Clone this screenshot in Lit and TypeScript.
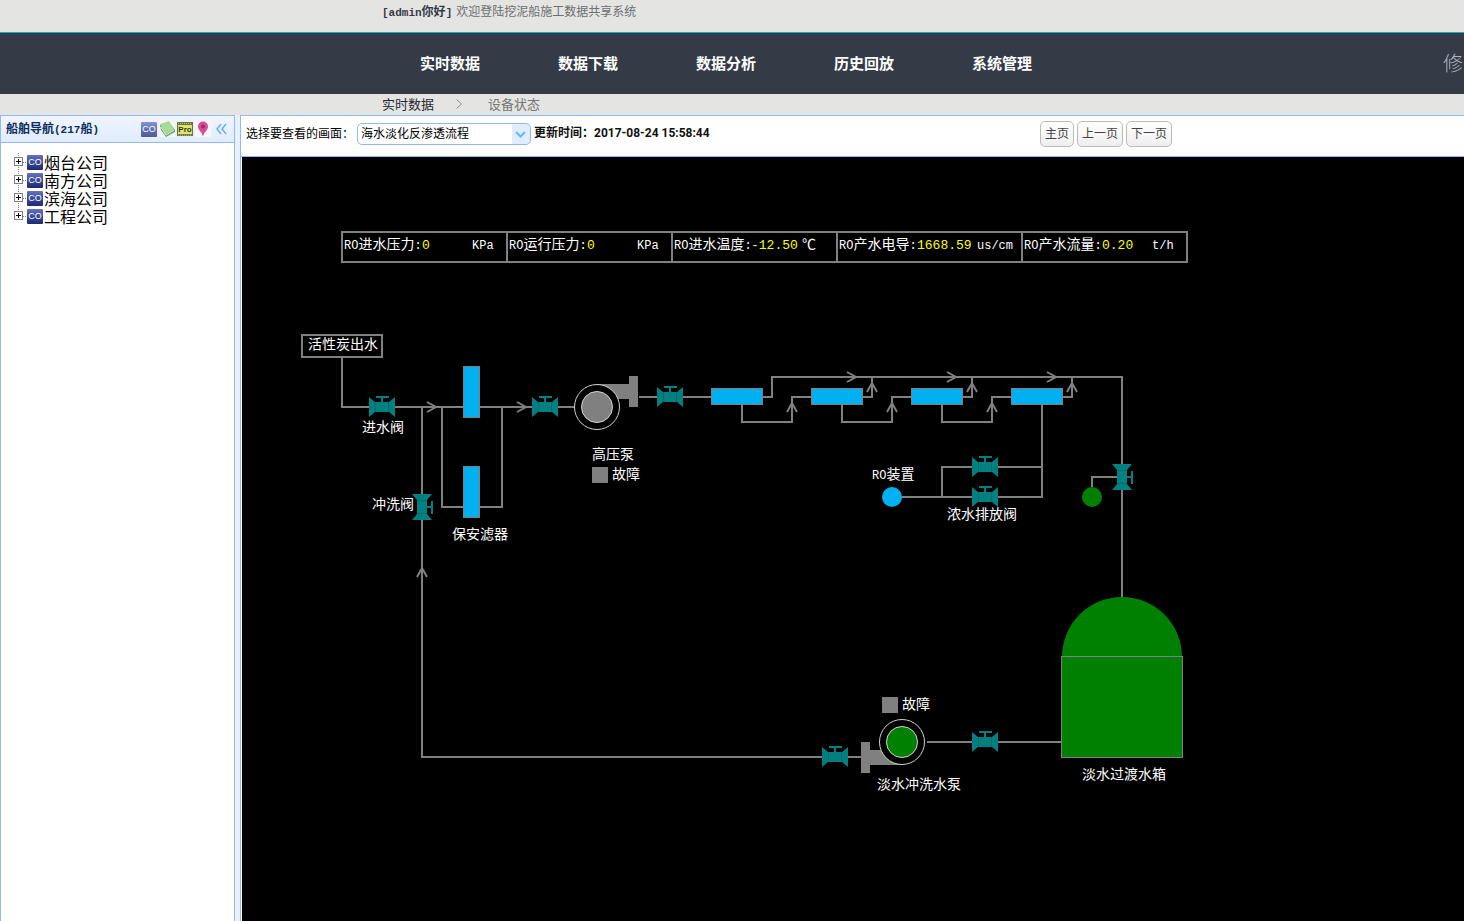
import { LitElement, html, svg, css } from "lit";
import { customElement, state } from "lit/decorators.js";

const NAV = ["实时数据", "数据下载", "数据分析", "历史回放", "系统管理"];
const COMPANIES = ["烟台公司", "南方公司", "滨海公司", "工程公司"];

/* Readings strip: left edge, label, value, value x, unit, unit x */
const READINGS = [
  { x: 102, label: "进水压力", value: "0", vx: 180, unit: "KPa", ux: 230, right: 265 },
  { x: 267, label: "运行压力", value: "0", vx: 345, unit: "KPa", ux: 395, right: 430 },
  { x: 432, label: "进水温度", value: "-12.50", vx: 509, unit: "℃", ux: 560, right: 595 },
  { x: 597, label: "产水电导", value: "1668.59", vx: 675, unit: "us/cm", ux: 735, right: 780 },
  { x: 782, label: "产水流量", value: "0.20", vx: 860, unit: "t/h", ux: 910, right: 945 },
];

/* Valve centres; upright ones are turned a quarter */
const VALVES: [number, number, number][] = [
  [140, 250, 0], [303, 250, 0], [428, 240, 0], [743, 310, 0], [743, 340, 0],
  [180, 350, 90], [880, 320, 90], [593, 600, 0], [743, 585, 0],
];

/* Arrow tips and direction in degrees, 0 pointing right */
const ARROWS: [number, number, number][] = [
  [195, 250, 0], [285, 250, 0], [615, 220, 0], [715, 220, 0], [815, 220, 0],
  [550, 245, -90], [650, 245, -90], [750, 245, -90],
  [630, 225, -90], [730, 225, -90], [830, 225, -90], [180, 410, -90],
];

const LABELS: [number, number, string][] = [
  [66, 192, "活性炭出水"], [120, 275, "进水阀"], [130, 352, "冲洗阀"],
  [210, 382, "保安滤器"], [350, 302, "高压泵"], [370, 322, "故障"],
  [705, 362, "浓水排放阀"], [660, 552, "故障"], [635, 632, "淡水冲洗水泵"],
  [840, 622, "淡水过渡水箱"],
];

@customElement("process-diagram")
export class ProcessDiagram extends LitElement {
  static styles = css`
    :host { display: flex; flex: 1; background: #000; overflow: hidden; }
    svg { display: block; width: 100%; min-height: 680px; }
    text { font: 14px "Noto Sans CJK SC", sans-serif; fill: #fff; }
    .latin { font: 12px "Liberation Mono", monospace; }
    .value { font: 13px "Liberation Mono", monospace; fill: #ff0; }
    .pipe { fill: none; stroke: #808080; stroke-width: 2; }
    .water { fill: #00b0f0; stroke: #808080; }
    .valve { fill: #008080; }
    .seam { stroke: #006c6c; }
    .gray { fill: #808080; }
    .blue { fill: #00b0f0; }
    .green { fill: #008000; }
    .tank { fill: #008000; stroke: #808080; }
    .ring { fill: #000; stroke: #d3d3d3; }
    .core { stroke: #d3d3d3; }
  `;

  private pump(x: number, y: number, angle: number, tone: string) {
    return svg`<g transform="translate(${x} ${y}) rotate(${angle})">
      <path class="gray" d="M0 -23H32V-8H0zM32 -31H41V0H32z"/>
      <circle class="ring" r="22.5"/>
      <circle class="core ${tone}" r="15.5"/>
    </g>`;
  }

  render() {
    return html`<svg role="img" aria-label="海水淡化反渗透流程">
      <path class="pipe" d="M100 75H945V105H100z"/>
      ${READINGS.map(r => svg`
        <path class="pipe" d="M${r.right} 75V105"/>
        <text x=${r.x} y="92"><tspan class="latin">RO</tspan>${r.label}<tspan class="latin">:</tspan></text>
        <text class="value" x=${r.vx} y="92">${r.value}</text>
        <text class=${r.unit === "℃" ? "" : "latin"} x=${r.ux} y="92">${r.unit}</text>`)}

      <rect class="pipe" x="60" y="178" width="80" height="22"/>
      <path class="pipe" d="M100 200V250H332M180 250V600H619M200 250V350H260V250"/>
      <path class="pipe" d="M397 240H469M521 240H530V220H880V440"/>
      ${[0, 100, 200].map(d => svg`<path class="pipe"
        d="M${500 + d} 248V265H${550 + d}V240H${569 + d}M${621 + d} 240H${630 + d}V220"/>`)}
      <path class="pipe" d="M821 240H830V220M800 248V340H650M700 340V310H800M850 330V320H880M685 585H819"/>

      ${[0, 100, 200, 300].map(d => svg`<rect class="water" x=${469.5 + d} y="231.5" width="51" height="16"/>`)}
      ${[0, 100].map(d => svg`<rect class="water" x="221.5" y=${209.5 + d} width="16" height="51"/>`)}

      ${ARROWS.map(([x, y, a]) => svg`<path class="pipe" transform="translate(${x} ${y}) rotate(${a})" d="M-10 -5L-1 0L-10 5"/>`)}
      ${VALVES.map(([x, y, a]) => svg`<g transform="translate(${x} ${y}) rotate(${a})">
        <path class="valve" d="M-13 -10L-7 -5H-1V-9H-6V-11H7V-9H1V-5H7L13 -10V10L7 5H-7L-13 10z"/>
        <path class="seam" d="M-6.5 -5V5M6.5 -5V5"/>
      </g>`)}

      ${this.pump(355, 250, 0, "gray")}
      ${this.pump(660, 585, 180, "green")}
      <rect class="gray" x="350" y="310" width="16" height="16"/>
      <rect class="gray" x="640" y="540" width="16" height="16"/>
      <circle class="blue" cx="650" cy="340" r="10"/>
      <circle class="green" cx="850" cy="340" r="10"/>
      <circle class="green" cx="880" cy="500" r="60"/>
      <rect class="tank" x="819.5" y="499.5" width="121" height="101"/>

      ${LABELS.map(([x, y, t]) => svg`<text x=${x} y=${y}>${t}</text>`)}
      <text x="630" y="322"><tspan class="latin">RO</tspan>装置</text>
    </svg>`;
  }
}

@customElement("co-icon")
export class CoIcon extends LitElement {
  static styles = css`
    :host { display: block; width: 16px; height: 16px; }
    svg { display: block; }
    text { font: 9px "Liberation Sans", sans-serif; fill: #fff; }
  `;
  render() {
    return html`<svg width="16" height="16" viewBox="0 0 16 16" aria-hidden="true">
      <defs><linearGradient id="g" x2="0" y2="1">
        <stop offset="0" stop-color="#6674bd"/><stop offset=".5" stop-color="#39489b"/><stop offset="1" stop-color="#20296c"/>
      </linearGradient></defs>
      <rect y="1" width="16" height="15" rx="1" fill="url(#g)"/>
      <text x="8" y="11" text-anchor="middle">CO</text>
    </svg>`;
  }
}

@customElement("ship-navigator")
export class ShipNavigator extends LitElement {
  static styles = css`
    :host { display: flex; flex-direction: column; border: 1px solid #95b8e7; border-bottom: 0; background: #fff; }
    .head {
      display: flex; align-items: center; height: 26px; padding: 0 5px;
      border-bottom: 1px solid #95b8e7; background: linear-gradient(#eff5ff, #e0ecff);
    }
    h2 { flex: 1; margin: 0; color: #0e2d5f; font: bold 12px/16px "Noto Sans CJK SC", sans-serif; white-space: nowrap; }
    .mono { font-family: "Liberation Mono", monospace; font-size: 11px; }
    .tools { display: flex; gap: 2px; }
    button { display: block; width: 16px; height: 16px; padding: 0; border: 0; background: none; cursor: pointer; }
    button svg { display: block; }
    .faded { opacity: .75; }
    .pro { font: bold 8px "Liberation Sans", sans-serif; fill: #33371c; }
    ul { list-style: none; margin: 0; padding: 10px 12px; }
    li { display: flex; align-items: center; height: 18px; font-size: 16px; line-height: 18px; color: #000; }
    .toggle { width: 14px; height: 18px; }
    a { display: flex; align-items: center; gap: 1px; color: inherit; text-decoration: none; }
  `;
  render() {
    return html`
      <div class="head">
        <h2>船舶导航<span class="mono">(217</span>船<span class="mono">)</span></h2>
        <div class="tools">
          <button class="faded" aria-label="公司"><co-icon></co-icon></button>
          <button aria-label="图册"><svg width="16" height="16">
            <rect width="16" height="16" fill="#f4f7f4"/>
            <path d="M1 4L10 1L16 9V11L7 16L2 9z" fill="#6aa567"/>
            <path d="M1 3L10 0L15 8L7 13z" fill="#a4dc98"/>
            <path d="M2 6L7 14L15 9" fill="none" stroke="#eef5e8"/>
          </svg></button>
          <button aria-label="项目"><svg width="16" height="16">
            <rect y="1" width="16" height="14" fill="#6d7142"/>
            <rect x="1" y="4" width="14" height="9" fill="#dee56c"/>
            <path d="M1 2.500H15M1 14H15" stroke="#c3c785" stroke-dasharray="1 1"/>
            <text class="pro" x="8" y="11" text-anchor="middle">Pro</text>
          </svg></button>
          <button aria-label="定位"><svg width="16" height="16">
            <rect width="16" height="16" fill="#f8f6fb"/>
            <path d="M8 15.500C7 11 3 9 3 5.500A5 5 0 0 1 13 5.500C13 9 9 11 8 15.500z" fill="#dc4b96"/>
            <circle cx="8" cy="5.500" r="2" fill="#8c3566"/>
          </svg></button>
          <button aria-label="收起"><svg width="16" height="16">
            <path d="M8 3L4 8L8 13M13 3L9 8L13 13" fill="none" stroke="#62b2ee" stroke-width="1.500"/>
          </svg></button>
        </div>
      </div>
      <ul>
        ${COMPANIES.map((name, i) => html`<li>
          <button class="toggle" aria-label="展开${name}"><svg width="14" height="18">
            <path d=${i < COMPANIES.length - 1 ? "M5.5 0V18" : "M5.5 0V9"} stroke="#808080" stroke-dasharray="1 1"/>
            <path d="M10 9.500H14" stroke="#808080" stroke-dasharray="1 1"/>
            <rect x="1.500" y="4.500" width="8" height="8" fill="#fff" stroke="#808080"/>
            <path d="M3 8.500H8M5.500 6V11" stroke="#000"/>
          </svg></button>
          <a href="#"><co-icon></co-icon>${name}</a>
        </li>`)}
      </ul>`;
  }
}

@customElement("app-root")
export class AppRoot extends LitElement {
  @state() private view = "海水淡化反渗透流程";

  static styles = css`
    :host {
      display: flex; flex-direction: column; min-height: 100vh; overflow: hidden;
      background: #e4e4e2; color: #000; font: 12px/16px "Noto Sans CJK SC", sans-serif;
    }
    .wrap { width: 700px; max-width: 100%; margin: 0 auto; }
    .welcome { height: 32px; border-bottom: 1px solid #1ca8cd; color: #6b6f70; }
    .welcome .wrap { display: flex; gap: 4px; padding-top: 3px; }
    .welcome strong { color: #343a46; }
    .mono { font-family: "Liberation Mono", monospace; font-size: 11px; }
    nav {
      display: grid; grid-template-columns: 1fr auto 1fr; align-items: center;
      box-sizing: border-box; height: 61px; padding-bottom: 2px; background: #343a46;
    }
    .menu { display: flex; grid-column: 2; box-sizing: border-box; width: 700px; padding-left: 38px; gap: 78px; }
    .menu a { color: #fff; font-size: 15px; line-height: 20px; font-weight: bold; text-decoration: none; white-space: nowrap; }
    .account { justify-self: end; width: 21px; color: #b0b3b8; font-size: 20px; line-height: 24px; font-weight: 300; text-decoration: none; }
    .crumbs { height: 21px; color: #777; font-size: 13px; line-height: 20px; }
    .crumbs .wrap { display: flex; align-items: center; }
    .crumbs a { color: #222831; text-decoration: none; }
    .crumbs svg { margin: 0 25px 0 21px; }
    .body { display: flex; flex: 1; gap: 5px; background: #e6f0ff; }
    ship-navigator { flex: 0 0 233px; }
    main { display: flex; flex-direction: column; flex: 1; min-width: 0; border: 1px solid #95b8e7; border-width: 1px 0 0 1px; background: #fff; }
    .bar { display: flex; align-items: flex-start; height: 35px; padding: 5px 0 0 5px; border-bottom: 1px solid #95b8e7; white-space: nowrap; }
    .bar label, .bar .time { line-height: 22px; }
    .bar label { padding-top: 1px; }
    .pick { position: relative; width: 174px; margin: 2px 3px 0; }
    select {
      appearance: none; box-sizing: border-box; width: 100%; height: 22px; padding: 0 20px 2px 3px;
      border: 1px solid #95b8e7; border-radius: 5px; color: #000; font: inherit;
      background: linear-gradient(#e0ecff, #e0ecff) right / 18px 100% no-repeat #fff;
    }
    .pick svg { position: absolute; right: 5px; top: 7px; pointer-events: none; }
    .time { font-weight: bold; color: #111; }
    time { font-family: Roboto, sans-serif; }
    .pages { display: flex; gap: 3px; margin: 0 292px 0 auto; }
    .pages button {
      height: 26px; padding: 0 4px 2px; border: 1px solid #bbb; border-radius: 5px; color: #444;
      font: inherit; background: linear-gradient(#fff, #eee);
    }
    process-diagram { margin-left: 1px; }
  `;

  render() {
    return html`
      <header>
        <div class="welcome"><div class="wrap">
          <strong><span class="mono">[admin</span>你好<span class="mono">]</span></strong>
          <span>欢迎登陆挖泥船施工数据共享系统</span>
        </div></div>
        <nav>
          <div class="menu">${NAV.map(n => html`<a href="#">${n}</a>`)}</div>
          <a class="account" href="#">修</a>
        </nav>
        <div class="crumbs"><div class="wrap">
          <a href="#">实时数据</a>
          <svg width="8" height="10"><path d="M1.500 .5L6.500 5L1.500 9.500" fill="none" stroke="#888"/></svg>
          <span>设备状态</span>
        </div></div>
      </header>
      <div class="body">
        <ship-navigator></ship-navigator>
        <main>
          <div class="bar">
            <label for="view">选择要查看的画面：</label>
            <div class="pick">
              <select id="view" @change=${(e: Event) => (this.view = (e.target as HTMLSelectElement).value)}>
                <option>${this.view}</option>
              </select>
              <svg width="11" height="9"><path d="M1 2L5.500 6.500L10 2" fill="none" stroke="#6cb8ef" stroke-width="2"/></svg>
            </div>
            <div class="time">更新时间：<time>2017-08-24 15:58:44</time></div>
            <div class="pages"><button>主页</button><button>上一页</button><button>下一页</button></div>
          </div>
          <process-diagram></process-diagram>
        </main>
      </div>`;
  }
}
